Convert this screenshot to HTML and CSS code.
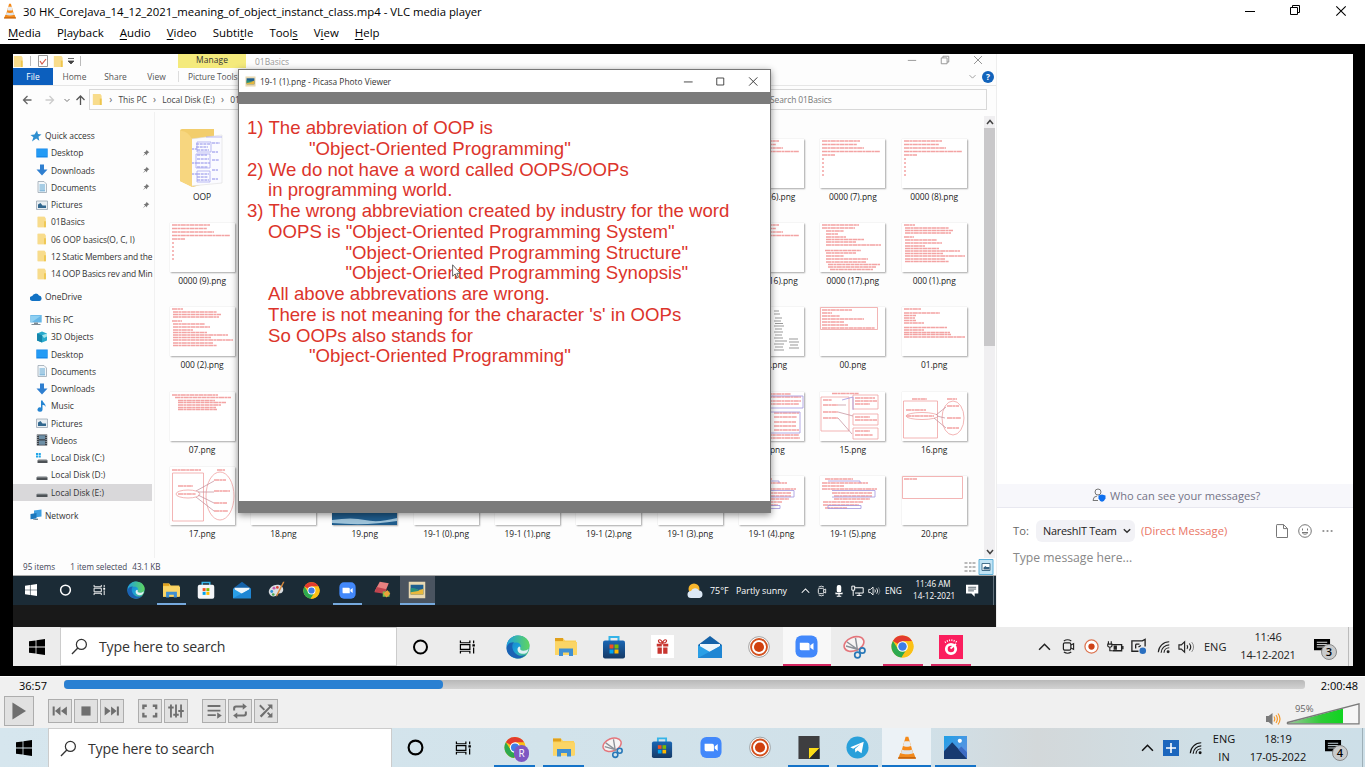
FILE: index.html
```html
<!DOCTYPE html>
<html lang="en">
<head>
<meta charset="utf-8">
<title>VLC media player</title>
<link rel="stylesheet" href="styles.css">
</head>
<body>
<svg class="defs" aria-hidden="true">
  <defs>
    <linearGradient id="g-edge" x1="0" y1="0" x2="1" y2="1"><stop offset="0" stop-color="#1b6fc0"/><stop offset=".5" stop-color="#1a9fd8"/><stop offset="1" stop-color="#62d36c"/></linearGradient>
    <linearGradient id="g-edge2" x1="0" y1="0" x2="1" y2="0"><stop offset="0" stop-color="#1fa2dc"/><stop offset="1" stop-color="#5fd55e"/></linearGradient>
    <linearGradient id="g-store" x1="0" y1="0" x2="0" y2="1"><stop offset="0" stop-color="#1a66b4"/><stop offset="1" stop-color="#153a66"/></linearGradient>
    <linearGradient id="g-vol" x1="0" y1="0" x2="1" y2="0"><stop offset="0" stop-color="#9bc79b"/><stop offset=".6" stop-color="#2ecb36"/><stop offset="1" stop-color="#10d420"/></linearGradient>
    <linearGradient id="g-photo" x1="0" y1="0" x2="1" y2="1"><stop offset="0" stop-color="#1fa0e6"/><stop offset="1" stop-color="#6a8fe0"/></linearGradient>
  </defs>
  <symbol id="cone" viewBox="0 0 20 22"><path d="M3.500 16.500 1.500 21.500h17l-2-5z" fill="#f08a1c"/><path d="M2 20h16l.6 1.700H1.400z" fill="#c8650c"/><path d="M8.700.6h2.600l5 17.400c-2 1.600-10.600 1.600-12.600 0z" fill="#f58a1a"/><path d="M7.500 5h5l1.300 4.500c-1.800 1-5.800 1-7.600 0z" fill="#e9ecef"/><path d="M5.200 12.800c2.500 1.200 7.100 1.200 9.600 0l1 3.700c-3 1.400-8.600 1.400-11.600 0z" fill="#dfe3e6"/></symbol>
  <symbol id="win" viewBox="0 0 16 16"><path d="M0 2.300 6.600 1.400v6.200H0zM7.400 1.300 16 0v7.600H7.400zM0 8.400h6.600v6.200L0 13.700zM7.400 8.400H16V16l-8.600-1.300z" fill="currentColor"/></symbol>
  <symbol id="search" viewBox="0 0 18 18"><circle cx="11" cy="6.800" r="5.300" fill="none" stroke="currentColor" stroke-width="1.300"/><path d="M7.200 10.600 1 16.900" stroke="currentColor" stroke-width="1.400"/></symbol>
  <symbol id="ring" viewBox="0 0 16 16"><circle cx="8" cy="8" r="6.500" fill="none" stroke="currentColor" stroke-width="2"/></symbol>
  <symbol id="tasks" viewBox="0 0 18 16"><path d="M1.500 1v2.500h10V1M1.500 15v-2.500h10V15M1.500 5.500h10v5h-10zM15.500 1v3M15.500 8.500V15" fill="none" stroke="currentColor" stroke-width="1.300"/><path d="M14.200 5h2.600v2.600h-2.600z" fill="currentColor"/></symbol>
  <symbol id="edge" viewBox="0 0 24 24"><circle cx="12" cy="12" r="11.500" fill="url(#g-edge)"/><path d="M1 9C3 3 8 .5 12 .5c7 0 11.500 5 11.500 9.500 0 4-3 5.800-6 5.800-2.800 0-4-1.400-3-3 1.200-2-.5-5.300-4-5.300C5 7.500 2 11 1 14z" fill="url(#g-edge2)"/><path d="M.6 13C1 9 4.500 7 8 7.300 5 9 5.500 18 13 20.500c3 .8 6-.2 8-2C18 23 13 24 10 23.300 4 22 .4 18 .6 13z" fill="#1a62b4"/><path d="M14.500 12.800c-1 1.600.2 3 3 3 2 0 4-.8 5-2-.4 2-1 3.500-2.500 4.500-4 1.500-8.500 0-8.500-4 0-1.500 1-2.500 2-2.800z" fill="#dff0f2"/></symbol>
  <symbol id="folder" viewBox="0 0 22 20"><path d="M0 1h8l2 2.500h11V18H0z" fill="#f9cf58"/><path d="M0 1h8v3H0z" fill="#e0a01c"/><path d="M0 5h22v13H0z" fill="#fbd566"/><path d="M4 19v-7.500h14V19h-4v-3.500H8V19z" fill="#3f8fd2"/></symbol>
  <symbol id="store" viewBox="0 0 24 24"><path d="M7.500 6V2h9v4" fill="none" stroke="#35b4e8" stroke-width="2"/><rect x="1" y="5.500" width="22" height="18" rx="2" fill="url(#g-store)"/><path d="M7.500 9.500h4v4h-4z" fill="#f25022"/><path d="M12.500 9.500h4v4h-4z" fill="#7fba00"/><path d="M7.500 14.500h4v4h-4z" fill="#00a4ef"/><path d="M12.500 14.500h4v4h-4z" fill="#ffb900"/></symbol>
  <symbol id="storew" viewBox="0 0 24 24"><path d="M7 6V2h10v4" fill="none" stroke="#35b4e8" stroke-width="2"/><rect x="1" y="5" width="22" height="18.500" rx="2.500" fill="#f4f6f8"/><path d="M7.500 9.500h4v4h-4z" fill="#f25022"/><path d="M12.500 9.500h4v4h-4z" fill="#7fba00"/><path d="M7.500 14.500h4v4h-4z" fill="#00a4ef"/><path d="M12.500 14.500h4v4h-4z" fill="#ffb900"/></symbol>
  <symbol id="mail" viewBox="0 0 24 22"><path d="M0 9 12 0l12 9v3H0z" fill="#1562a8"/><path d="M2 8h20v9H2z" fill="#eef6fb"/><path d="M0 9l12 7 12-7v13H0z" fill="#2a9fe6"/><path d="M0 22 24 9v13z" fill="#1f86d3"/></symbol>
  <symbol id="rec" viewBox="0 0 24 24"><circle cx="12" cy="12" r="11.300" fill="#fff" stroke="#777" stroke-width=".7"/><circle cx="12" cy="12" r="8.700" fill="#fff" stroke="#d2501e" stroke-width="2"/><circle cx="12" cy="12" r="5.500" fill="#d0400e"/></symbol>
  <symbol id="recs" viewBox="0 0 24 24"><circle cx="12" cy="12" r="10.500" fill="#fff" stroke="#dc7450" stroke-width="2"/><circle cx="12" cy="12" r="5" fill="#cf4318"/></symbol>
  <symbol id="zoom" viewBox="0 0 24 24"><rect x=".5" y=".5" width="23" height="23" rx="6.500" fill="#4288fb"/><path d="M5 8h8.500q1.700 0 1.700 1.700V16H6.700Q5 16 5 14.300zM16 10.800 19.300 8.300v7.400L16 13.200z" fill="#fff"/></symbol>
  <symbol id="snip" viewBox="0 0 24 24"><ellipse cx="11" cy="9" rx="10.300" ry="6.800" transform="rotate(-22 11 9)" fill="#f6f4f4" stroke="#e4757b" stroke-width="1.600"/><path d="M4 7l11.500 8M12.500 3l2 12.500M3 11l10.500 3" stroke="#8b9097" stroke-width="1.500"/><circle cx="19.300" cy="15.500" r="2.700" fill="none" stroke="#2878b8" stroke-width="1.700"/><circle cx="14.500" cy="20" r="2.800" fill="none" stroke="#2878b8" stroke-width="1.700"/></symbol>
  <symbol id="chrome" viewBox="0 0 24 24"><circle cx="12" cy="12" r="11.500" fill="#fbc116"/><path d="M12 12 2 6.200A11.500 11.500 0 0 1 22 6.500H12z" fill="#e33b2e"/><path d="M2 6.200A11.500 11.500 0 0 0 11 23.450L16.700 14.600 7.300 14.600z" fill="#2da94f"/><path d="M12 6.500H22A11.500 11.500 0 0 1 11 23.450L17 14z" fill="#fbc116"/><circle cx="12" cy="12" r="5.600" fill="#fff"/><circle cx="12" cy="12" r="4.400" fill="#3e7de8"/></symbol>
  <symbol id="gift" viewBox="0 0 24 24"><path d="M0 0h24v24H0z" fill="#fff"/><path d="M6 9h5.300v3H6zM12.700 9H18v3h-5.300zM6.800 13h4.500v6.500H6.800zM12.700 13h4.500v6.500h-4.500z" fill="#c8342f"/><path d="M12 8.500C7 8.500 7 5 9 5s3 3.500 3 3.500 1-3.500 3-3.500 2 3.500-3 3.500z" fill="none" stroke="#c8342f" stroke-width="1.200"/></symbol>
  <symbol id="gauge" viewBox="0 0 24 24"><path d="M0 0h24v24H0z" fill="#fb1e5e"/><circle cx="12" cy="14" r="4.700" fill="none" stroke="#fff" stroke-width="2.800"/><path d="M11.500 13.500 17 9" stroke="#fff" stroke-width="1.800"/><path d="M6 7.500a9 9 0 0 1 12 0" fill="none" stroke="#fff" stroke-width="1.700" stroke-dasharray="1 1.300"/></symbol>
  <symbol id="sticky" viewBox="0 0 22 24"><path d="M0 0h22v24H0z" fill="#3e3e40"/><path d="M11 12.500h11L11 24z" fill="#fcdc16"/><path d="M22 12.500V24H11z" fill="#2b2b2d"/></symbol>
  <symbol id="tele" viewBox="0 0 24 24"><circle cx="12" cy="12" r="11.500" fill="#29a0da"/><path d="M4.500 11.700 18.500 6l-2.300 12-4.200-3-2.200 2.200-.5-3.700L15 8.500l-7.500 4.700z" fill="#fff"/></symbol>
  <symbol id="photos" viewBox="0 0 24 24"><path d="M0 0h24v24H0z" fill="url(#g-photo)"/><path d="M0 16 8.500 6.500 24 23v1H0z" fill="#173a70"/><path d="m15 14 3-3 6 6v7z" fill="#3d6cc4"/><circle cx="16.500" cy="5" r="2.200" fill="#fff"/></symbol>
  <symbol id="paint" viewBox="0 0 24 24"><path d="M1 15C1 8 8 4 14 5s8 7 5 10-6 0-7 3-9 5-11-3z" fill="#d9dde0"/><circle cx="5" cy="14" r="1.900" fill="#2c8fd4"/><circle cx="8" cy="9.500" r="1.900" fill="#c35cb3"/><circle cx="12.500" cy="8.500" r="1.800" fill="#d84432"/><circle cx="7" cy="18" r="1.800" fill="#46a850"/><path d="M22 1 13 19l-2 2 .3-3L20 1z" fill="#d98a3c"/></symbol>
  <symbol id="cards" viewBox="0 0 24 24"><path d="m9 1 12 2-5 12-14-1z" fill="#e88080"/><path d="m5 8 13 3-3 6-13-2z" fill="#c0444e"/><path d="M13 14h9v7h-9z" fill="#7ac04c"/><path d="m14 17 5-5 4 5-5 5z" fill="#e9a33a"/></symbol>
  <symbol id="pview" viewBox="0 0 24 24"><path d="M1 1h22v22H1z" fill="#e9d9b2"/><path d="M3.500 5h17v13h-17z" fill="#1f5f8f"/><path d="M3.500 12c5-4 9 3 17-2v8h-17z" fill="#e7b83c"/><path d="M3.500 10c5-2 9 2 12 3l-12 2z" fill="#27907c"/></symbol>
  <symbol id="chev" viewBox="0 0 12 8"><path d="m1 7 5-5 5 5" fill="none" stroke="currentColor" stroke-width="1.400"/></symbol>
  <symbol id="cam" viewBox="0 0 14 18"><rect x="1.500" y="5" width="8" height="8" rx="1.500" fill="none" stroke="currentColor" stroke-width="1.300"/><path d="M9.500 7.500 12.500 6v6l-3-1.500M2 3q4-2.500 8 0M2 15q4 2.500 8 0" fill="none" stroke="currentColor" stroke-width="1.200"/></symbol>
  <symbol id="mic" viewBox="0 0 10 16"><rect x="2" y="0" width="6" height="10" rx="2.500" fill="currentColor"/><path d="M1 10v1.500h8V10M5 11v4M2 15h6" fill="none" stroke="currentColor" stroke-width="1.600"/></symbol>
  <symbol id="net" viewBox="0 0 16 14"><path d="M4.500 3h10.500v6.500H5M1 1h3.500v5H1zM2.700 6v7M10 9.500V12M7 12.500h6" fill="none" stroke="currentColor" stroke-width="1.200"/></symbol>
  <symbol id="spk" viewBox="0 0 18 14"><path d="M1 4.800h2.500L7 1.500v11L3.500 9.200H1z" fill="none" stroke="currentColor" stroke-width="1.200"/><path d="M9.500 5q1.500 2 0 4M12 3.300q3 3.700 0 7.400" fill="none" stroke="currentColor" stroke-width="1.200"/><path d="M14.500 1.800q4 5.200 0 10.400" fill="none" stroke="currentColor" opacity=".5"/></symbol>
  <symbol id="wifi" viewBox="0 0 16 16"><path d="M1.500 14A12.500 12.500 0 0 1 14 2M4.700 14.500A9.400 9.400 0 0 1 14 5.500M8 14.500a6 6 0 0 1 6-5.700" fill="none" stroke="currentColor" stroke-width="1.300"/><circle cx="12.700" cy="13.500" r="1.700" fill="currentColor"/></symbol>
  <symbol id="note" viewBox="0 0 18 18"><path d="M0 1h17v12h-5v4.500L7.500 13H0z" fill="currentColor"/><path d="M3 4.500h11M3 7h11M3 9.500h8" stroke="var(--note-line)" stroke-width="1"/></symbol>
  <symbol id="batt" viewBox="0 0 18 14"><path d="M5 4.500h10.500v6.500H6" fill="none" stroke="currentColor" stroke-width="1.400"/><path d="M7 5.500h3.500V10H7zM16 6h1.500v3.500H16z" fill="currentColor"/><path d="M1.500 1v3M4.500 1v3M.8 4h4.400v2q-2 2.500-4.400 0zM3 7v4h3" fill="none" stroke="currentColor" stroke-width="1.200"/></symbol>
  <symbol id="screen" viewBox="0 0 18 18"><path d="M16 9V1.500L13 3H2v11h7M10 6.500H6M6 11V7.500q0-1 1-1M9 9.500 11.500 8" fill="none" stroke="currentColor" stroke-width="1.400"/><circle cx="13.500" cy="13.500" r="3.500" fill="#2a6fc0"/></symbol>
  <symbol id="min" viewBox="0 0 12 12"><path d="M1 6.500h10" stroke="currentColor"/></symbol>
  <symbol id="max" viewBox="0 0 12 12"><path d="M2 2h8v8H2z" fill="none" stroke="currentColor"/></symbol>
  <symbol id="restore" viewBox="0 0 12 12"><path d="M1.500 3.500h7v7h-7zM3.500 3.500v-2h7v7h-2" fill="none" stroke="currentColor"/></symbol>
  <symbol id="x" viewBox="0 0 12 12"><path d="m1.300 1.300 9.400 9.400M10.700 1.300 1.300 10.700" stroke="currentColor" stroke-width="1.100"/></symbol>
  <symbol id="fold" viewBox="0 0 12 14"><path d="M1 1h8v12H1z" fill="#f3cf70"/><path d="M1 1h8l1.500 2v10H1z" fill="#f8dc8c"/><path d="M8.500 6 10.500 6v7h-2z" fill="#eec54c"/></symbol>
  <symbol id="desk" viewBox="0 0 12 12"><path d="M.3 1.500h11.400v9H.3z" fill="#1487e8"/><path d="M1 2.200h10v7H1z" fill="#239bf5"/></symbol>
  <symbol id="down" viewBox="0 0 12 12"><path d="M4 .5h4v5h3.500L6 11.500.5 5.500H4z" fill="#2f7fd0"/></symbol>
  <symbol id="doc" viewBox="0 0 12 12"><path d="M2 .5h6l2.500 2.500v8.500H2z" fill="#f3f7fa" stroke="#9aa7b2" stroke-width=".8"/><path d="M3.500 4H9M3.500 6H9M3.500 8H9M3.500 9.800H9" stroke="#4a98cc" stroke-width=".9"/></symbol>
  <symbol id="pic" viewBox="0 0 12 12"><path d="M.5 2h11v8.500H.5z" fill="#e8eef2" stroke="#9aa7b2" stroke-width=".8"/><path d="M2 5.500 4.500 4l2 2.500H10v2.500H2z" fill="#33688f"/></symbol>
  <symbol id="star" viewBox="0 0 12 12"><path d="m7 .5 1 3.500 3.500.5-3 2.300.8 4L6.200 8.600 2 11.500l1.400-4.300L.5 5l4-.5z" fill="#2f8fd0"/></symbol>
  <symbol id="pin" viewBox="0 0 10 10"><path d="m5.500.8 3.700 3.700-1.300.2-1.500 1.500-.1 1.800-1.800-1.800L1 9.200l2.800-3.700L2 3.700l1.900-.1 1.500-1.500z" fill="#777"/></symbol>
  <symbol id="cloud" viewBox="0 0 12 12"><path d="M2.500 10a2.500 2.500 0 0 1-.3-5A3.800 3.800 0 0 1 9 4.500a2.800 2.800 0 0 1 .5 5.500z" fill="#1272c4"/></symbol>
  <symbol id="pc" viewBox="0 0 12 12"><path d="M.3 1h11.400v7.500H.3z" fill="#66b6e6"/><path d="M1 1.700h10L2 8H1z" fill="#8fd0f2"/><path d="M4 8.500h4v1.500h2.500v1h-9v-1H4z" fill="#7e8c96"/></symbol>
  <symbol id="cube" viewBox="0 0 12 12"><path d="m1 2.500 5-2 5 2v7l-5 2-5-2z" fill="#27a9cc"/><path d="m1 2.500 5 1.700v7.300l-5-2z" fill="#1585ab"/><path d="m6 4.200 5-1.700v3L8 7z" fill="#a3e4ee"/></symbol>
  <symbol id="music" viewBox="0 0 12 12"><path d="M5 .5h1.500C7 3 10 3.500 9.500 7 9 5 7.500 5 6.500 5v4.500A2.500 2.200 0 1 1 5 7.600z" fill="#2585d2"/></symbol>
  <symbol id="film" viewBox="0 0 12 12"><path d="M.8.500h10.400v11H.8z" fill="#3a4148"/><path d="M3 1.200h6v4H3zM3 6.500h6v4.300H3z" fill="#6d8fa6"/><path d="M1.900 1v10M10.100 1v10" stroke="#c8cdd2" stroke-width="1" stroke-dasharray="1 1"/></symbol>
  <symbol id="disk" viewBox="0 0 12 12"><path d="M1.500 7h9l1 1.500H.5z" fill="#b7bbbe"/><path d="M.5 8.300h11v2.700H.5z" fill="#4d5256"/></symbol>
  <symbol id="diskc" viewBox="0 0 12 12"><path d="M0 1h2v2H0zM2.600 1h2.200v2H2.600zM0 3.600h2v2H0zM2.600 3.600h2.200v2H2.600z" fill="#22a7e8"/><path d="M2.500 7h8l1 1.500H1.500z" fill="#b7bbbe"/><path d="M1.500 8.300h10v2.700h-10z" fill="#4d5256"/></symbol>
  <symbol id="netw" viewBox="0 0 12 12"><path d="m4 1.500 7.500-1v7l-7.500 1z" fill="#3e9fe0"/><path d="m.5 5 6-1v5.500l-6 .8z" fill="#1d78bc"/><path d="M3 10.500 8 9.500v1.500H3z" fill="#6f8796"/></symbol>

  <!-- thumbnail drawings -->
  <symbol id="t-short" viewBox="0 0 65 49"><path class="ink" d="M2 2h38M2 5.500h35M2 9h42M2 12.500h58M2 16h13M2 20h2M2 24h2M2 28h2M2 32h2M2 36h2"/></symbol>
  <symbol id="t-long" viewBox="0 0 65 49"><path class="ink" d="M2 2h37M2 5h33M6 8h18M6 11h12M6 14h20M6 16.500h38M6 19h30M6 22h55M5 27.500h36M6 30h30M6 33h18M6 36h42M6 39h40M8 41.500h52M8 44h48M10 46.500h43"/></symbol>
  <symbol id="t-mid" viewBox="0 0 65 49"><path class="ink" d="M2 2h11M3 5h44M3 7.500h48M3 10h46M2 14h10M3 17h32M3 20h37M3 23h20M3 25.500h34M3 28h55M3 30.500h38M3 33h60M3 36h40M3 38.500h44"/></symbol>
  <symbol id="t-box" viewBox="0 0 65 49"><path class="box" d="M.5.500h57v22H.5z"/><path class="ink" d="M2 3h30M2 6h10M2 9h18M2 12h42M2 15h22M2 18h26M2 21h53"/></symbol>
  <symbol id="t-01" viewBox="0 0 65 49"><path class="ink" d="M2 2h17M2 6h36M2 8.500h12M2 11h11M2 13.500h12M2 16h20M2 20.500h43M2 23h20M2 25.500h46M2 27.500h47M2 30h61"/></symbol>
  <symbol id="t-07" viewBox="0 0 65 49"><path class="ink" d="M2 3h46M5 5.500h56M8 8.500h37M8 10.500h48M8 13h43M8 15.500h38M8 17.500h39"/></symbol>
  <symbol id="t-blk" viewBox="0 0 65 49"><path class="blk" d="M35 4h5M35 7h6M36 11h7M35 14h7M36 16.500h8M35 19h10M36 22h7M35 25h9M36 28h7M35 31h9M36 34h12M35 37h10M36 40h8M35 43h10M50 32h9M50 35h10M51 38h8M50 41h10"/></symbol>
  <symbol id="t-14" viewBox="0 0 65 49"><path class="ink" d="M2 2h50M2 5h60M2 9h60M2 12h58M35 21h25M35 25h23M35 30h22M35 34h22M35 38h25M2 43h58M2 46h59"/><path class="blue" d="M2 4h62v12H2zM2 20h59v21H2z"/></symbol>
  <symbol id="t-15" viewBox="0 0 65 49"><path class="box" d="M1 5h28v34H1zM33 3h25v14H33zM33 22h25v11H33zM33 36h25v11H33z"/><path class="ink" d="M12 1.500h27M3 8h9M3 13h15M3 20h15M3 26h15M35 6h20M35 9h22M35 12h15M35 25h15M35 28h22M35 39h15M35 43h18"/><path class="blue" d="M22 8 33 5v13"/><path class="wire" d="M18 13h8M18 20l15 4M18 26l14 16"/></symbol>
  <symbol id="t-16" viewBox="0 0 65 49"><path class="box" d="M1.500 9h34v37h-34z"/><ellipse class="box" cx="51" cy="26" rx="11" ry="17"/><ellipse class="box" cx="20" cy="24" rx="16" ry="3.500"/><path class="ink" d="M10 7h15M45 7h10M4 18h20M4 24h28M45 14h12M45 26h14M45 36h12"/><path class="wire" d="M34 23 44 15M35 24l8 2M32 26l12 10"/></symbol>
  <symbol id="t-17" viewBox="0 0 65 58"><path class="box" d="M2.500 6h31v48h-31z"/><ellipse class="box" cx="50" cy="29" rx="14" ry="24"/><ellipse class="box" cx="18" cy="27" rx="12" ry="4"/><path class="ink" d="M2 3h29M47 3h8M8 19h15M8 27h18M44 13h12M44 24h16M44 36h13M44 44h14"/><path class="wire" d="M26 24 44 14M28 25l16 0M28 28l16 8M26 30l18 14"/></symbol>
  <symbol id="t-19" viewBox="0 0 65 49"><path class="ink" d="M5 3h28M2 7h46M2 10h22M2 13h55M12 17h40M14 20h38M14 23h36M3 26h40M3 29h36M5 32h22"/><path class="blue" d="M8 5h32v2M12 14.500h43v6.500H12M8 29.500h33v3H8z"/></symbol>
  <symbol id="t-20" viewBox="0 0 65 49"><path class="box" d="M.5.500h60v22H.5z"/><path class="ink" d="M2 3h13"/></symbol>
</svg>

<header class="titlebar">
  <svg class="app"><use href="#cone"/></svg>
  <span class="title">30 HK_CoreJava_14_12_2021_meaning_of_object_instanct_class.mp4 - VLC media player</span>
  <div class="wbtns"><svg><use href="#min"/></svg><svg><use href="#restore"/></svg><svg><use href="#x"/></svg></div>
</header>
<nav class="menubar">
  <span><u>M</u>edia</span><span>P<u>l</u>ayback</span><span><u>A</u>udio</span><span><u>V</u>ideo</span><span>Subti<u>t</u>le</span><span>Tool<u>s</u></span><span>V<u>i</u>ew</span><span><u>H</u>elp</span>
</nav>

<main class="video">
  <div class="stage">
    <section class="share">
      <div class="explorer">
        <div class="quickbar">
          <svg class="f"><use href="#fold"/></svg><i class="bar"></i>
          <svg class="chk" viewBox="0 0 10 12"><path d="M.5.500h9v11h-9z" fill="#fff" stroke="#999"/><path d="m2 6 2 3 4-5" fill="none" stroke="#d65a4a" stroke-width="1.200"/></svg>
          <svg class="f"><use href="#fold"/></svg>
          <svg class="dd" viewBox="0 0 8 8"><path d="M1 1.500h6M1 4h6L4 7z" stroke="#444" fill="#444" stroke-width=".8"/></svg><i class="bar"></i>
          <span class="manage">Manage</span><span class="wt">01Basics</span>
          <div class="ebtns"><svg><use href="#min"/></svg><svg><use href="#restore"/></svg><svg><use href="#x"/></svg></div>
        </div>
        <div class="tabs">
          <span class="file">File</span><span class="tab t1">Home</span><span class="tab t2">Share</span><span class="tab t3">View</span><span class="tab ptools">Picture Tools</span>
          <svg class="ddn" viewBox="0 0 12 8"><path d="m2 1.500 4 4 4-4" fill="none" stroke="#999" stroke-width="1.200"/></svg>
          <b class="help">?</b>
        </div>
        <div class="address">
          <svg class="arrows" viewBox="0 0 66 16" fill="none" stroke-width="1.300"><path d="M9 4 5 8l4 4M5 8h8" stroke="#666"/><path d="m31 4 4 4-4 4M35 8h-8" stroke="#ccc"/><path d="m46 7 2.500 2.500L51 7" stroke="#777" stroke-width="1"/><path d="m59 8 4-4 4 4M63 4v9" stroke="#555" transform="translate(-1)"/></svg>
          <div class="path"><svg><use href="#fold"/></svg><span class="sep">›</span><span>This PC</span><span class="sep">›</span><span>Local Disk (E:)</span><span class="sep">›</span><span>01</span></div>
          <div class="searchbox">Search 01Basics</div>
        </div>
        <div class="ebody">
          <ul class="tree">
            <li class="top"><svg><use href="#star"/></svg>Quick access</li>
            <li><svg><use href="#desk"/></svg>Desktop<svg class="pin"><use href="#pin"/></svg></li>
            <li><svg><use href="#down"/></svg>Downloads<svg class="pin"><use href="#pin"/></svg></li>
            <li><svg><use href="#doc"/></svg>Documents<svg class="pin"><use href="#pin"/></svg></li>
            <li><svg><use href="#pic"/></svg>Pictures<svg class="pin"><use href="#pin"/></svg></li>
            <li><svg><use href="#fold"/></svg>01Basics</li>
            <li><svg><use href="#fold"/></svg>06 OOP basics(O, C, I)</li>
            <li class="tight"><svg><use href="#fold"/></svg>12 Static Members and the</li>
            <li class="tight"><svg><use href="#fold"/></svg>14 OOP Basics rev and Min</li>
            <li class="top gap"><svg><use href="#cloud"/></svg>OneDrive</li>
            <li class="top gap"><svg><use href="#pc"/></svg>This PC</li>
            <li><svg><use href="#cube"/></svg>3D Objects</li>
            <li><svg><use href="#desk"/></svg>Desktop</li>
            <li><svg><use href="#doc"/></svg>Documents</li>
            <li><svg><use href="#down"/></svg>Downloads</li>
            <li><svg><use href="#music"/></svg>Music</li>
            <li><svg><use href="#pic"/></svg>Pictures</li>
            <li><svg><use href="#film"/></svg>Videos</li>
            <li><svg><use href="#diskc"/></svg>Local Disk (C:)</li>
            <li><svg><use href="#disk"/></svg>Local Disk (D:)</li>
            <li class="sel"><svg><use href="#disk"/></svg>Local Disk (E:)</li>
            <li class="top gap"><svg><use href="#netw"/></svg>Network</li>
          </ul>
          <div class="files">
            <div class="c1 r1"><svg class="oop" viewBox="0 0 46 60"><path d="M1 3q0-2 2-2h32v52L14 59 1 53z" fill="#f2cd6c"/><path d="M12 11 43 7v48L12 58z" fill="#fbfbff" stroke="#ddd" stroke-width=".6"/><path d="M17 16h14M17 19h12M18 22h12M18 27h10M18 31h12M18 35h13M18 39h11M18 46h12M18 49h11M18 52h12M33 15h8M33 24h6M33 32h7M33 42h6M33 51h6M12 21h6M12 35h6M12 46h6" stroke="#8a8ae8" stroke-dasharray="3 .7" stroke-width="1"/><path d="M18 14h14v10H18zM17 26h14v14H17zM18 43h13v11H18zM27 9h16" fill="none" stroke="#9f9fec" stroke-width=".7"/><path d="M1 3Q8 2 13 11v48L1 53z" fill="#f7d67f"/></svg><span>OOP</span></div>
            <div class="c8 r1"><svg class="th"><use href="#t-short"/></svg><span>0000 (6).png</span></div>
            <div class="c9 r1"><svg class="th"><use href="#t-short"/></svg><span>0000 (7).png</span></div>
            <div class="c10 r1"><svg class="th"><use href="#t-short"/></svg><span>0000 (8).png</span></div>
            <div class="c1 r2"><svg class="th"><use href="#t-short"/></svg><span>0000 (9).png</span></div>
            <div class="c8 r2"><svg class="th"><use href="#t-short"/></svg><span>0000 (16).png</span></div>
            <div class="c9 r2"><svg class="th"><use href="#t-long"/></svg><span>0000 (17).png</span></div>
            <div class="c10 r2"><svg class="th"><use href="#t-mid"/></svg><span>000 (1).png</span></div>
            <div class="c1 r3"><svg class="th"><use href="#t-mid"/></svg><span>000 (2).png</span></div>
            <div class="c8 r3"><svg class="th"><use href="#t-blk"/></svg><span>000.png</span></div>
            <div class="c9 r3"><svg class="th"><use href="#t-box"/></svg><span>00.png</span></div>
            <div class="c10 r3"><svg class="th"><use href="#t-01"/></svg><span>01.png</span></div>
            <div class="c1 r4"><svg class="th"><use href="#t-07"/></svg><span>07.png</span></div>
            <div class="c8 r4"><svg class="th"><use href="#t-14"/></svg><span>14.png</span></div>
            <div class="c9 r4"><svg class="th"><use href="#t-15"/></svg><span>15.png</span></div>
            <div class="c10 r4"><svg class="th"><use href="#t-16"/></svg><span>16.png</span></div>
            <div class="c1 r5"><svg class="th tall"><use href="#t-17"/></svg><span>17.png</span></div>
            <div class="c2 r5"><svg class="th"></svg><span>18.png</span></div>
            <div class="c3 r5"><svg class="th photo" viewBox="0 0 65 49"><path d="M0 36h65v13H0z" fill="#1f5c8c"/><path d="M0 44q20-3 33 0t32-2v3q-30 5-65 2z" fill="#9fc4da"/></svg><span>19.png</span></div>
            <div class="c4 r5"><svg class="th"></svg><span>19-1 (0).png</span></div>
            <div class="c5 r5"><svg class="th"></svg><span>19-1 (1).png</span></div>
            <div class="c6 r5"><svg class="th"></svg><span>19-1 (2).png</span></div>
            <div class="c7 r5"><svg class="th"></svg><span>19-1 (3).png</span></div>
            <div class="c8 r5"><svg class="th"><use href="#t-19"/></svg><span>19-1 (4).png</span></div>
            <div class="c9 r5"><svg class="th"><use href="#t-19"/></svg><span>19-1 (5).png</span></div>
            <div class="c10 r5"><svg class="th"><use href="#t-20"/></svg><span>20.png</span></div>
          </div>
          <div class="scroll"><svg viewBox="0 0 12 8"><path d="m3 6 3-3.500L9 6" fill="none" stroke="#444" stroke-width="1.500"/></svg><i></i><svg viewBox="0 0 12 8"><path d="m3 2 3 3.500L9 2" fill="none" stroke="#444" stroke-width="1.500"/></svg></div>
        </div>
        <div class="status"><span>95 items</span><span class="s2">1 item selected</span><span class="s3">43.1 KB</span>
          <svg class="vw" viewBox="0 0 30 16"><path d="M1 4h3M1 8h3M1 12h3M5.500 4H8M9 4h3M5.500 8H8M9 8h3M5.500 12H8M9 12h3" stroke="#777" stroke-width="1.200"/><path d="M15.500.500h14v15h-14z" fill="#c2e4f5" stroke="#5fb0d8"/><path d="M18.500 4.500h8v7h-8z" fill="#fff" stroke="#47718c"/><path d="M20 8.500 22 7l1 1h3v2.500h-6z" fill="#345f80"/></svg>
        </div>
        <article class="viewer">
          <header><svg class="vi"><use href="#pview"/></svg><span>19-1 (1).png - Picasa Photo Viewer</span><div class="vbtns"><svg><use href="#min"/></svg><svg><use href="#max"/></svg><svg><use href="#x"/></svg></div></header>
          <div class="slide">
            <p>1) The abbreviation of OOP is</p>
            <p class="i3">"Object-Oriented Programming"</p>
            <p>2) We do not have a word called OOPS/OOPs</p>
            <p class="i2">in programming world.</p>
            <p>3) The wrong abbreviation created by industry for the word</p>
            <p class="i2">OOPS is "Object-Oriented Programming System"</p>
            <p class="i4">"Object-Oriented Programming Structure"</p>
            <p class="i4">"Object-Oriented Programming Synopsis"</p>
            <p class="i2">All above abbrevations are wrong.</p>
            <p class="i2">There is not meaning for the character 's' in OOPs</p>
            <p class="i2">So OOPs also stands for</p>
            <p class="i3">"Object-Oriented Programming"</p>
          </div>
        </article>
        <svg class="cursor" viewBox="0 0 9 15"><path d="M.6.800v11.400l2.600-2.300 1.700 4 1.600-.7-1.700-3.900h3.400z" fill="#fff" stroke="#555" stroke-width=".9"/></svg>
      </div>
      <div class="bar1">
        <div class="b first"><svg class="s12"><use href="#win"/></svg></div><div class="b nr"><svg class="s13"><use href="#ring"/></svg></div><div class="b nr"><svg class="s13"><use href="#tasks"/></svg></div>
        <div class="b lead"><svg><use href="#edge"/></svg></div><div class="b run"><svg class="s16"><use href="#folder"/></svg></div><div class="b"><svg><use href="#storew"/></svg></div><div class="b"><svg><use href="#mail"/></svg></div><div class="b"><svg><use href="#paint"/></svg></div><div class="b"><svg class="s16"><use href="#chrome"/></svg></div><div class="b run"><svg class="s16"><use href="#zoom"/></svg></div><div class="b"><svg><use href="#cards"/></svg></div><div class="b on"><svg><use href="#pview"/></svg></div>
        <div class="tray1">
          <svg class="wx" viewBox="0 0 16 16"><circle cx="7" cy="6" r="5.500" fill="#f8b62c"/><path d="M4 15a3.500 3.500 0 0 1 0-7 4.500 4.500 0 0 1 8-.5A3.800 3.800 0 0 1 12.500 15z" fill="#dce8f4"/></svg>
          <span class="deg">75°F</span><span class="sunny">Partly sunny</span>
          <svg class="ti k1"><use href="#chev"/></svg><svg class="ti k2"><use href="#cam"/></svg><svg class="ti k2"><use href="#mic"/></svg><svg class="ti k3"><use href="#net"/></svg><svg class="ti k3"><use href="#spk"/></svg>
          <span class="eng">ENG</span><span class="clk">11:46 AM<br>14-12-2021</span><svg class="nt"><use href="#note"/></svg>
        </div>
      </div>
      <div class="gapbar"></div>
    </section>
    <aside class="chat">
      <div class="who"><svg viewBox="0 0 14 14"><circle cx="6" cy="4" r="3" fill="none" stroke="#777"/><path d="M1 12.500q0-4 4-4.500M1 12.500h5" fill="none" stroke="#777"/><path d="m10 6.500 3.500 1v3q-1 2.500-3.500 3.200Q7.500 13 6.500 10.500v-3z" fill="#0e6fee"/></svg>Who can see your messages?</div>
      <div class="to"><span class="lbl">To:</span><span class="pill">NareshIT Team<svg viewBox="0 0 8 6"><path d="m.8 1.200 3.200 3 3.200-3" fill="none" stroke="#333" stroke-width="1.500"/></svg></span><span class="dm">(Direct Message)</span>
        <span class="tools"><svg viewBox="0 0 14 14"><path d="M2 .600h6.500L12.500 4.500v9H2q-.5 0-.5-1V1.300q0-.7.5-.7zM8.500.600v4h4" fill="none" stroke="#777"/></svg><svg viewBox="0 0 14 14"><circle cx="7" cy="7" r="6.300" fill="none" stroke="#777"/><path d="M4.500 4.500v2M9.500 4.500v2M4 8.500q3 3.500 6 0z" fill="none" stroke="#777"/></svg><svg viewBox="0 0 14 14"><path d="M1.500 7h1.800M5.600 7h1.800M9.700 7h1.800" stroke="#777" stroke-width="1.700"/></svg></span>
      </div>
      <div class="type">Type message here...</div>
    </aside>
  </div>
  <div class="bar2">
    <div class="start"><svg><use href="#win"/></svg></div>
    <div class="find"><svg><use href="#search"/></svg>Type here to search</div>
    <div class="b q"><svg class="s18"><use href="#ring"/></svg></div><div class="b q"><svg class="s18"><use href="#tasks"/></svg></div>
    <div class="b lead2"><svg><use href="#edge"/></svg></div><div class="b"><svg class="s22"><use href="#folder"/></svg></div><div class="b"><svg><use href="#store"/></svg></div><div class="b"><svg class="s23"><use href="#gift"/></svg></div><div class="b"><svg><use href="#mail"/></svg></div><div class="b"><svg class="s22"><use href="#rec"/></svg></div><div class="b on"><svg class="s23"><use href="#zoom"/></svg></div><div class="b"><svg><use href="#snip"/></svg></div><div class="b run"><svg class="s23"><use href="#chrome"/></svg></div><div class="b run"><svg><use href="#gauge"/></svg></div>
    <div class="tray2">
      <svg class="a1"><use href="#chev"/></svg><svg class="a2"><use href="#cam"/></svg><svg class="a3"><use href="#recs"/></svg><svg class="a4"><use href="#batt"/></svg><svg class="a5"><use href="#screen"/></svg><svg class="a6"><use href="#wifi"/></svg><svg class="a7"><use href="#spk"/></svg>
      <span class="eng">ENG</span><span class="clk">11:46<br>14-12-2021</span><span class="nwrap"><svg><use href="#note"/></svg><b>3</b></span>
    </div>
  </div>
</main>

<section class="controls">
  <div class="seekrow"><span class="now">36:57</span><div class="seek"><i style="width:30.5%"></i></div><span class="len">2:00:48</span></div>
  <div class="btnrow">
    <button class="play"><svg viewBox="0 0 30 30"><path d="M8 6l14.500 9L8 24z"/></svg></button>
    <button class="g1"><svg viewBox="0 0 24 24"><path d="M4 7h2.200v10H4zM12.500 7v10L6.500 12zM19.500 7v10l-6.500-5z"/></svg></button>
    <button><svg viewBox="0 0 24 24"><path d="M7 7h10v10H7z"/></svg></button>
    <button><svg viewBox="0 0 24 24"><path d="M17.300 7h2.200v10h-2.200zM4 7v10l6.500-5zM11 7v10l6-5z"/></svg></button>
    <button class="g2"><svg viewBox="0 0 24 24"><path d="M3.500 5h5v2.500H6V10H3.500zM15 5h5v5h-2.500V7.500H15zM3.500 14H6v2.500h2.500V19h-5zM17.500 14H20v5h-5v-2.500h2.500z"/></svg></button>
    <button><svg viewBox="0 0 24 24"><path d="M5.500 5h2v14h-2zM11 5h2v14h-2zM16.500 5h2v14h-2zM3.500 7h6v2.200h-6zM9 15h6v2.200H9zM14.500 11h6v2.200h-6z"/></svg></button>
    <button class="g3"><svg viewBox="0 0 24 24"><path d="M5 5.500h14v2H5zM5 10.500h14v2H5zM5 15.500h9v2H5zM15.500 13.500l5 3.500-5 3.500z"/></svg></button>
    <button><svg viewBox="0 0 24 24"><path d="M4.500 11.500V9q0-3 3-3H15V3.500L19.500 7 15 10.500V8.200H8q-1.300 0-1.300 1.300v2zM19.500 12.500V15q0 3-3 3H9v2.500L4.500 17 9 13.500v2.300h7q1.300 0 1.300-1.300v-2z"/></svg></button>
    <button><svg viewBox="0 0 24 24"><path d="M6 5l5 5-1.500 1.500L4.500 6.500zM13.500 5H19v5.500l-2-2L7 19l-1.800-1.800L15.500 7zM14.500 13l2.500 2.500 2-2V19h-5.500l2-2L13 14.500z"/></svg></button>
    <div class="vol">
      <svg class="spkr" viewBox="0 0 15 14"><path d="M0 4h2.500L6.500 1v12L2.500 10H0z" fill="#7a7a7a"/><path d="M8 4.500q1.500 2.500 0 5M10 3q2.800 4 0 8M12 1.500q4 5.500 0 11" fill="none" stroke="#f79a2a" stroke-width="1.200"/></svg>
      <span>95%</span>
      <svg class="tri" viewBox="0 0 74 24"><path d="M2 21 57 6.500V21.500H2z" fill="url(#g-vol)"/><path d="M57 6.500 73 2v19.500H57z" fill="#f6f6f6"/><path d="M1.500 20.500 73 1.800v20H2q-1 0-.5-1.300z" fill="none" stroke="#7a7a7a" stroke-width="1.300"/></svg>
    </div>
  </div>
</section>

<footer class="bar3">
  <div class="start"><svg><use href="#win"/></svg></div>
  <div class="find"><svg><use href="#search"/></svg>Type here to search</div>
  <div class="b q"><svg class="s17"><use href="#ring"/></svg></div><div class="b q"><svg class="s18"><use href="#tasks"/></svg></div>
  <div class="b run lead3"><svg><use href="#chrome"/></svg><em>R</em></div><div class="b run"><svg><use href="#folder"/></svg></div><div class="b"><svg><use href="#snip"/></svg></div><div class="b"><svg><use href="#store"/></svg></div><div class="b"><svg><use href="#zoom"/></svg></div><div class="b"><svg><use href="#rec"/></svg></div><div class="b run"><svg><use href="#sticky"/></svg></div><div class="b run"><svg class="s22"><use href="#tele"/></svg></div><div class="b on"><svg><use href="#cone"/></svg></div><div class="b run"><svg class="s22"><use href="#photos"/></svg></div>
  <div class="tray3">
    <svg class="a1"><use href="#chev"/></svg>
    <svg class="plus" viewBox="0 0 16 16"><path d="M0 0h16v16H0z" fill="#1c66bd"/><path d="M8 3v10M3 8h10" stroke="#fff" stroke-width="1.600"/></svg>
    <svg class="a6"><use href="#wifi"/></svg>
    <span class="eng">ENG<br>IN</span><span class="clk">18:19<br>17-05-2022</span><span class="nwrap"><svg><use href="#note"/></svg><b>4</b></span>
  </div>
</footer>
</body>
</html>
```

FILE: styles.css
```css
* { box-sizing: border-box; }
body { margin: 0; width: 1365px; height: 767px; overflow: hidden; display: flex; flex-direction: column; background: #fff; color: #000; font-family: "Open Sans", "Noto Sans", sans-serif; font-size: 12px; }
.defs { position: absolute; width: 0; height: 0; }
svg { display: block; flex: none; }
span { white-space: nowrap; }
.ink, .blk, .box, .blue, .wire { fill: none; }
.ink { stroke: #f3a3a3; stroke-width: 1.5; stroke-dasharray: 5 .4 3 .4; }
.blk { stroke: #999; stroke-width: 1.2; }
.box { stroke: #f0a2a2; stroke-width: .8; }
.blue { stroke: #a195de; stroke-width: .8; }
.wire { stroke: #c08a97; stroke-width: .7; }

/* player title and menu */
.titlebar { height: 22px; flex: none; display: flex; align-items: center; padding-left: 3px; }
.app { width: 14px; height: 16px; }
.title { margin-left: 6px; font-size: 11.350px; line-height: 16px; padding-top: 1px; }
.wbtns { margin-left: auto; display: flex; gap: 33.500px; padding-right: 18px; }
.wbtns svg { width: 12px; height: 12px; }
.wbtns svg:nth-child(2) { margin: -1px 1px 0 -1px; }
.menubar { height: 22px; flex: none; display: flex; align-items: center; gap: 16px; padding: 0 0 1px 8px; font-size: 11.450px; }
.menubar u { text-underline-offset: 2px; }

/* video area */
.video { height: 632px; flex: none; background: #000; padding: 10px 12px 10px 13px; display: flex; flex-direction: column; }
.stage { height: 573px; display: flex; }
.share { width: 983px; display: flex; flex-direction: column; background: #fff; }
.explorer { height: 522px; width: 983px; position: relative; display: flex; flex-direction: column; background: #fdfdfd; color: #333; font-size: 8.450px; overflow: hidden; }
.quickbar { height: 14px; display: flex; align-items: center; overflow: hidden; }
.quickbar .f { width: 11px; height: 13px; }
.quickbar .bar { width: 1px; height: 10px; background: #bbb; margin: 0 7px 0 6px; }
.quickbar .chk { width: 10px; height: 12px; margin-right: 5px; }
.quickbar .dd { width: 8px; height: 8px; margin-left: 3px; }
.quickbar .dd + .bar { margin-left: 5px; }
.manage { margin-left: 90px; width: 68px; height: 14px; line-height: 11px; text-align: center; background: #f4ea7c; letter-spacing: .1px; }
.wt { margin-left: 9px; color: #999; line-height: 13px; }
.ebtns { display: flex; gap: 23px; margin: -3px 0 0 auto; padding-right: 13px; color: #888; }
.ebtns svg { width: 10px; height: 10px; }
.tabs { height: 18px; display: flex; align-items: center; border-bottom: 1px solid #e6e6e6; }
.file { width: 40px; height: 17px; line-height: 17px; background: #0c5fbe; color: #fff; text-align: center; }
.tab { width: 41px; text-align: center; color: #555; }
.t1 { margin-left: 1px; }
.ptools { width: 62px; margin-left: 1px; padding-left: 9px; border-left: 1px solid #ddd; text-align: left; letter-spacing: -.1px; }
.ddn { width: 9px; height: 6px; margin-left: auto; }
.help { width: 12px; height: 12px; line-height: 12px; border-radius: 6px; background: #1263bb; color: #fff; text-align: center; margin: 0 2px 0 5px; }
.address { height: 26px; display: flex; align-items: center; padding: 1px 9px 0 3px; color: #444; }
.arrows { width: 71px; height: 16px; }
.path { width: 540px; height: 21px; border: 1px solid #d8d8d8; display: flex; align-items: center; padding-left: 2px; margin-left: 2px; letter-spacing: -.05px; }
.path svg { width: 11px; height: 13px; }
.path .sep { width: 15.500px; text-align: center; color: #666; font-size: 10px; line-height: 12px; padding-bottom: 1px; }
.searchbox { flex: 1; height: 21px; line-height: 19px; margin-left: 119px; padding-left: 21px; border: 1px solid #d8d8d8; color: #777; letter-spacing: -.08px; }
.ebody { height: 446px; display: flex; }
.tree { width: 142px; margin: 0; padding: 15px 0 0; list-style: none; border-right: 1px solid #f1f1f1; }
.tree li { width: 141px; height: 17.250px; display: flex; align-items: center; gap: 3px; padding-left: 23px; white-space: nowrap; letter-spacing: -.03px; }
.tree li.top { padding-left: 17px; }
.tree li.gap { margin-top: 5.800px; }
.tree li.tight { letter-spacing: -.16px; }
.tree svg { width: 12px; height: 12px; }
.tree svg.pin { width: 8px; height: 8px; margin-left: auto; margin-right: 4px; }
.tree .sel { background: #d9d8da; width: 139px; }
.files { padding: 7.800px 0 0 6.400px; display: grid; grid-template-columns: repeat(10, 81.350px); grid-template-rows: repeat(5, 84.200px); width: 829px; color: #222; }
.files div { display: flex; flex-direction: column; align-items: center; justify-content: flex-end; }
.files span { line-height: 14px; margin-top: 2px; letter-spacing: -.05px; }
.th { width: 65px; height: 49px; background: #fff; box-shadow: 1px 1px 1.500px #aaa, 0 0 1px #ddd; }
.th.tall { height: 58px; }
.oop { width: 46px; height: 60px; }
.c1 { grid-column: 1; } .c2 { grid-column: 2; } .c3 { grid-column: 3; } .c4 { grid-column: 4; } .c5 { grid-column: 5; }
.c6 { grid-column: 6; } .c7 { grid-column: 7; } .c8 { grid-column: 8; } .c9 { grid-column: 9; } .c10 { grid-column: 10; }
.r1 { grid-row: 1; } .r2 { grid-row: 2; } .r3 { grid-row: 3; } .r4 { grid-row: 4; } .r5 { grid-row: 5; }
.scroll { width: 11px; margin: 4px 0 0; background: #f0eff1; display: flex; flex-direction: column; align-items: center; }
.scroll svg { width: 12px; height: 8px; margin: 2px 0; }
.scroll i { width: 11px; height: 218px; background: #c9c8ca; margin-bottom: auto; }
.status { height: 18px; display: flex; align-items: center; padding: 0 2px 0 10px; font-size: 8.100px; color: #3f4457; border-bottom: 1px solid #aaa; }
.s2 { margin-left: 15px; } .s3 { margin-left: 5px; }
.vw { width: 31px; height: 16px; margin-left: auto; }

/* photo viewer window */
.viewer { position: absolute; left: 225px; top: 15px; width: 533px; height: 444px; background: #fff; border: solid #777; border-width: 1px 1px 12px; border-bottom-color: #7b7b7b; box-shadow: 0 2px 7px rgba(0,0,0,.45); }
.viewer header { height: 22px; display: flex; align-items: center; padding-left: 6px; color: #333; font-size: 8.350px; }
.vi { width: 11px; height: 11px; margin-right: 4px; }
.vbtns { margin-left: auto; display: flex; gap: 22px; padding-right: 12px; color: #333; }
.vbtns svg { width: 10.500px; height: 11px; }
.slide { border-top: 12px solid #7b7b7b; padding: 14px 0 0 8px; color: #dc342b; font: 18.600px/20.750px "Liberation Sans", sans-serif; letter-spacing: .020px; }
.slide p { margin: 0; white-space: pre; }
.slide .i2 { padding-left: 21px; } .slide .i3 { padding-left: 62px; } .slide .i4 { padding-left: 98.500px; }
.cursor { position: absolute; left: 439px; top: 210px; width: 9px; height: 15px; }

/* taskbars */
.b { position: relative; display: flex; align-items: center; justify-content: center; flex: none; }
.bar1 { height: 29px; background: #1b2b36; color: #fff; --note-line: #1b2b36; display: flex; font-size: 8.900px; }
.bar1 .b { width: 35.200px; }
.bar1 .b.first { width: 35px; } .bar1 .b.nr { width: 34px; }
.bar1 .b.lead { margin-left: 2.400px; }
.bar1 .b svg { width: 18px; height: 18px; margin-top: -1px; }
.bar1 .b svg.s12 { width: 12px; height: 12px; } .bar1 .b svg.s13 { width: 13px; height: 12px; } .bar1 .b svg.s16 { width: 17px; height: 17px; }
.bar1 .run::after, .bar1 .on::after { content: ""; position: absolute; bottom: 0; left: 3px; right: 3px; height: 2px; background: #76a9dd; }
.bar1 .on { background: #4a5460; }
.bar1 .on::after { left: 0; right: 0; }
.tray1 { margin-left: auto; display: flex; align-items: center; padding-right: 14px; border-right: 1px solid #62717c; margin-right: 2px; }
.wx { width: 16px; height: 16px; }
.deg { width: 20px; margin-left: 7px; } .sunny { width: 54px; margin-left: 6px; }
.ti { height: 12px; } .k1 { width: 9px; margin: 0 7px 0 11px; height: 7px; } .k2 { width: 10px; margin-right: 7px; } .k3 { width: 13px; margin-right: 4px; }
.tray1 .eng { width: 17px; font-size: 8.300px; }
.tray1 .clk { width: 40px; margin: -1px 13px 0 11px; text-align: center; line-height: 12.500px; font-size: 8.100px; }
.nt { width: 13px; height: 13px; }
.gapbar { height: 22px; background: #191919; }
.bar2 { height: 39px; background: #ececec; --note-line: #ececec; display: flex; }
.start { display: flex; align-items: center; justify-content: center; }
.bar2 .start { width: 47px; }
.start svg { width: 16px; height: 16px; }
.find { background: #fff; border: 1px solid #ccc; display: flex; align-items: center; font-size: 14.150px; color: #333; letter-spacing: -.2px; }
.find svg { width: 17px; height: 17px; }
.bar2 .find { width: 337px; padding-left: 10px; gap: 11px; }
.bar2 .b { width: 48.100px; }
.bar2 .b svg { width: 24px; height: 24px; }
.bar2 .b svg.s22 { width: 22px; height: 22px; } .bar2 .b svg.s23 { width: 23px; height: 23px; } .bar2 .b svg.s18, .bar3 .b svg.s18 { width: 17px; height: 16px; }
.bar2 .b.q { width: 47px; } .bar2 .b.lead2 { margin-left: 3px; }
.bar2 .on { background: #f8f8f8; }
.bar2 .on::after, .bar2 .run::after { content: ""; position: absolute; bottom: 0; left: 4px; right: 4px; height: 2px; background: #d42660; }
.bar2 .on::after { left: 0; right: 0; }
.tray2 { margin-left: auto; width: 311px; display: flex; align-items: center; color: #222; margin-right: 4px; border-right: 1px solid #bbb; }
.a1 { width: 13px; height: 9px; } .tray2 .a2 { width: 13px; height: 17px; margin-left: 11px; } .a3 { width: 15px; height: 15px; margin-left: 9px; } .a4 { width: 17px; height: 14px; margin-left: 8px; } .a5 { width: 17px; height: 17px; margin-left: 6px; }
.a6 { width: 14px; height: 14px; } .tray2 .a6 { margin-left: 10px; } .a7 { width: 17px; height: 14px; margin-left: 7px; }
.tray2 .eng { width: 23px; margin-left: 9px; font-size: 11px; }
.tray2 .clk { width: 58px; margin: -2px 0 0 12px; line-height: 18px; text-align: center; font-size: 11px; letter-spacing: -.2px; }
.nwrap { position: relative; color: #000; }
.nwrap svg { width: 17px; height: 17px; }
.nwrap b { position: absolute; left: 7px; top: 6px; width: 16px; height: 16px; line-height: 14px; border: 1px solid #888; border-radius: 8px; background: #c9cbcc; text-align: center; font-size: 11px; font-weight: 600; }
.tray2 .nwrap { margin-left: 17px; }

/* chat panel */
.chat { flex: 1; background: #fff; padding-top: 430px; color: #666; border-left: 1px solid #eee; }
.who { height: 24px; background: #f7f7fb; border-bottom: 1px solid #e8e8f0; display: flex; align-items: center; padding: 0 0 1px 95px; gap: 4px; font-size: 11.080px; color: #747487; }
.who svg { width: 14px; height: 14px; }
.to { height: 22px; margin: 12px 18px 0 16px; display: flex; align-items: center; font-size: 11.200px; }
.lbl, .dm { padding-bottom: 1px; }
.lbl { width: 23px; }
.pill { width: 99px; height: 22px; line-height: 20px; border-radius: 6px; background: #f2f2f6; color: #222; padding-left: 7px; display: flex; align-items: center; gap: 6px; font-size: 10.900px; letter-spacing: -.25px; }
.pill svg { width: 8px; height: 6px; }
.dm { margin-left: 6px; color: #ea7565; }
.tools { margin-left: auto; display: flex; gap: 9px; }
.tools svg { width: 14px; height: 14px; }
.type { margin: 7px 0 0 16px; font-size: 12.200px; line-height: 18px; color: #888; }

/* player controls */
.controls { height: 52px; flex: none; background: #f0f0f0; border-top: 1px solid #fff; }
.seekrow { display: flex; height: 19px; align-items: center; padding: 0 7px 0 19px; font-size: 11px; }
.seekrow span { line-height: 14px; padding-bottom: 1px; }
.now { width: 45px; }
.seek { width: 1241px; height: 9px; border-radius: 3px; background: linear-gradient(#b8b8b8, #d2d2d2); margin-bottom: 4px; }
.seek i { display: block; height: 9px; border-radius: 4px; background: #2a80d2; }
.len { margin-left: auto; }
.btnrow { display: flex; align-items: center; height: 30px; padding-left: 4px; }
button { width: 24px; height: 24px; padding: 0; margin: 0 2px 0 0; border: 1px solid #adadad; background: #e1e1e1; }
button svg { width: 22px; height: 22px; fill: #6f6f6f; }
.play { width: 30px; height: 30px; margin-right: 14px; }
.play svg { width: 28px; height: 28px; }
.g2, .g3 { margin-left: 12px; }
.vol { margin-left: auto; width: 100px; height: 30px; position: relative; }
.vol .spkr { position: absolute; left: 1px; top: 16px; width: 15px; height: 14px; }
.vol span { position: absolute; left: 30px; top: 6px; font-size: 9.500px; line-height: 13px; color: #666; letter-spacing: -.1px; }
.vol .tri { position: absolute; left: 21px; top: 6px; width: 74px; height: 24px; }

/* desktop taskbar */
.bar3 { height: 39px; flex: none; --note-line: #d3e3eb; display: flex; background: linear-gradient(90deg, #d6e6ee, #d2e3eb 40%, #d0e0e8 68%, #d3d8da 76%, #cfdfe6 88%, #cddfe8); }
.bar3 .start { width: 48px; }
.bar3 .find { width: 344px; border-bottom: 0; padding-left: 11px; gap: 11px; }
.bar3 .b { width: 49px; }
.bar3 .b svg { width: 22px; height: 23px; }
.bar3 .b svg.s17 { width: 17px; height: 17px; } .bar3 .b svg.s22 { width: 23px; height: 23px; }
.bar3 .b.q { width: 47.500px; } .bar3 .b.lead3 { margin-left: 3px; }
.b em { position: absolute; left: 24px; top: 17px; width: 15px; height: 17px; line-height: 17px; border-radius: 9px; background: #7e57c2; color: #fff; font-style: normal; font-size: 10px; text-align: center; }
.bar3 .on { background: #ecf2f6; }
.bar3 .on::after, .bar3 .run::after { content: ""; position: absolute; bottom: 0; left: 4px; right: 4px; height: 2px; background: #1473c8; }
.bar3 .on::after { left: 0; right: 0; }
.tray3 { margin-left: auto; width: 222px; display: flex; align-items: center; margin-right: 2px; border-right: 1px solid #9fb0b8; color: #111; font-size: 11px; }
.tray3 .plus { width: 16px; height: 16px; margin-left: 9px; }
.tray3 .a6 { margin-left: 10px; }
.tray3 .eng { width: 24px; margin-left: 9px; text-align: center; line-height: 17.500px; }
.tray3 .clk { width: 60px; margin-left: 12px; text-align: center; line-height: 17.500px; letter-spacing: -.1px; }
.tray3 .nwrap { margin-left: 17px; }
```
